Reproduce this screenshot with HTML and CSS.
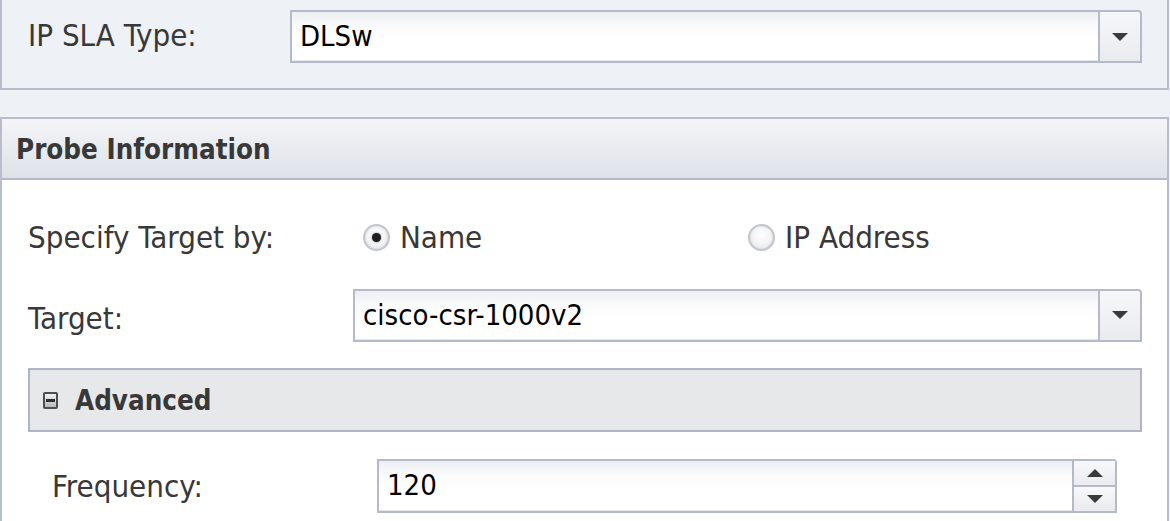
FILE: index.html
```html
<!DOCTYPE html>
<html>
<head>
<meta charset="utf-8">
<link rel="stylesheet" href="styles.css">
</head>
<body>
<div class="type-panel">
  <div class="type-label">IP SLA Type:</div>
  <div class="select">
    <div class="select-value">DLSw</div>
    <div class="select-btn"><span class="arrow-down"></span></div>
  </div>
</div>

<div class="probe-panel">
  <div class="probe-header">Probe Information</div>
  <div class="probe-body">
    <div class="row row-specify">
      <div class="label label-specify">Specify Target by:</div>
      <div class="radio-group radio-name">
        <span class="radio checked"><span class="dot"></span></span>
        <span class="radio-text">Name</span>
      </div>
      <div class="radio-group">
        <span class="radio"></span>
        <span class="radio-text">IP Address</span>
      </div>
    </div>
    <div class="row row-target">
      <div class="label label-target">Target:</div>
      <div class="select">
        <div class="select-value">cisco-csr-1000v2</div>
        <div class="select-btn"><span class="arrow-down"></span></div>
      </div>
    </div>
    <div class="advanced">
      <span class="collapse-icon"><span class="minus"></span></span>
      <span class="advanced-text">Advanced</span>
    </div>
    <div class="row row-freq">
      <div class="label label-freq">Frequency:</div>
      <div class="spinner">
        <div class="select-value">120</div>
        <div class="spin-btns">
          <div class="spin-btn"><span class="arrow-up"></span></div>
          <div class="spin-btn spin-down"><span class="arrow-down"></span></div>
        </div>
      </div>
    </div>
  </div>
</div>
</body>
</html>
```

FILE: styles.css
```css
* { box-sizing: border-box; }
html, body { margin: 0; padding: 0; }
body {
  width: 1170px;
  height: 521px;
  overflow: hidden;
  background: #eef1f5;
  font-family: "DejaVu Sans Condensed", "DejaVu Sans", sans-serif;
  font-stretch: condensed;
  font-size: 31px;
  color: #383838;
}

.type-panel {
  width: 1169px;
  height: 90px;
  border: 2px solid #b8bccb;
  border-top: none;
  display: flex;
  align-items: flex-start;
  padding: 10px 25px 0 26px;
}
.type-label {
  width: 262px;
  height: 52px;
  line-height: 50px;
}

.select {
  flex: 1;
  height: 53px;
  border: 2px solid #b4b9cb;
  border-radius: 0 4px 0 0;
  background: linear-gradient(#eceef1 0, #fbfbfc 30%, #fff 60%);
  display: flex;
}
.select-value {
  flex: 1;
  color: #000;
  font-size: 29px;
  padding-left: 8px;
  line-height: 48px;
  border-bottom: 1px solid #e6e8ec;
}
.select-btn {
  width: 42px;
  border-left: 2px solid #b4b9cb;
  background: linear-gradient(#f6f7f9, #e9ebee);
  display: flex;
  align-items: center;
  justify-content: center;
  border-radius: 0 3px 0 0;
}
.arrow-down {
  width: 0; height: 0;
  border-left: 8px solid transparent;
  border-right: 8px solid transparent;
  border-top: 8px solid #3a3a3a;
}
.arrow-up {
  width: 0; height: 0;
  border-left: 8px solid transparent;
  border-right: 8px solid transparent;
  border-bottom: 8px solid #3a3a3a;
}

.probe-panel {
  margin-top: 27px;
  width: 1169px;
  height: 420px;
  border: 2px solid #b8bccb;
  border-bottom: none;
  background: #fff;
}
.probe-header {
  height: 61px;
  border-bottom: 2px solid #b4b9c8;
  background: linear-gradient(#f4f5f8, #e6e9ee 60%, #dfe3e9);
  font-weight: bold;
  font-size: 27.5px;
  line-height: 60px;
  padding-left: 14px;
}
.probe-body {
  padding: 31px 25px 0 26px;
  display: flex;
  flex-direction: column;
}
.row {
  display: flex;
  align-items: center;
}
.row-specify { height: 52px; }
.label-specify { width: 335px; }
.radio-group {
  display: flex;
  align-items: center;
}
.radio-name { width: 385px; }
.radio {
  width: 27px;
  height: 27px;
  border-radius: 50%;
  border: 2px solid #c2c6cf;
  background: radial-gradient(circle at 50% 40%, #ffffff 0, #f3f4f6 50%, #dfe1e6 100%);
  box-shadow: inset 0 0 2px rgba(0,0,0,0.15);
  display: flex;
  align-items: center;
  justify-content: center;
  margin-right: 10px;
}
.dot {
  width: 9px;
  height: 9px;
  border-radius: 50%;
  background: #1e1e1e;
  box-shadow: 0 0 2px rgba(0,0,0,0.5);
}
.row-target {
  margin-top: 25px;
  height: 54px;
}
.label-target { width: 325px; padding-top: 6px; }

.advanced {
  margin-top: 26px;
  height: 64px;
  border: 2px solid #b0b5c5;
  background: #e7e8ea;
  display: flex;
  align-items: center;
  padding-left: 13px;
  font-weight: bold;
  font-size: 27.5px;
}
.collapse-icon {
  width: 15px;
  height: 17px;
  border: 2px solid #4e4e4e;
  border-radius: 2px;
  background: linear-gradient(#f2f2f2, #b8b8b8);
  display: flex;
  align-items: center;
  justify-content: center;
  margin-right: 17px;
}
.minus {
  width: 9px;
  height: 3px;
  background: #2e2e2e;
}

.row-freq {
  margin-top: 27px;
  padding-left: 24px;
  padding-right: 25px;
  height: 54px;
}
.label-freq { width: 325px; }
.spinner {
  flex: 1;
  height: 54px;
  border: 2px solid #b4b9cb;
  border-radius: 0 4px 0 0;
  background: linear-gradient(#eceef1 0, #fbfbfc 30%, #fff 60%);
  display: flex;
}
.spin-btns {
  width: 43px;
  border-left: 2px solid #b4b9cb;
  display: flex;
  flex-direction: column;
}
.spin-btn {
  flex: 1;
  background: linear-gradient(#f8f9fa, #e9ebee);
  display: flex;
  align-items: center;
  justify-content: center;
}
.spin-down {
  border-top: 2px solid #b4b9cb;
}
```
